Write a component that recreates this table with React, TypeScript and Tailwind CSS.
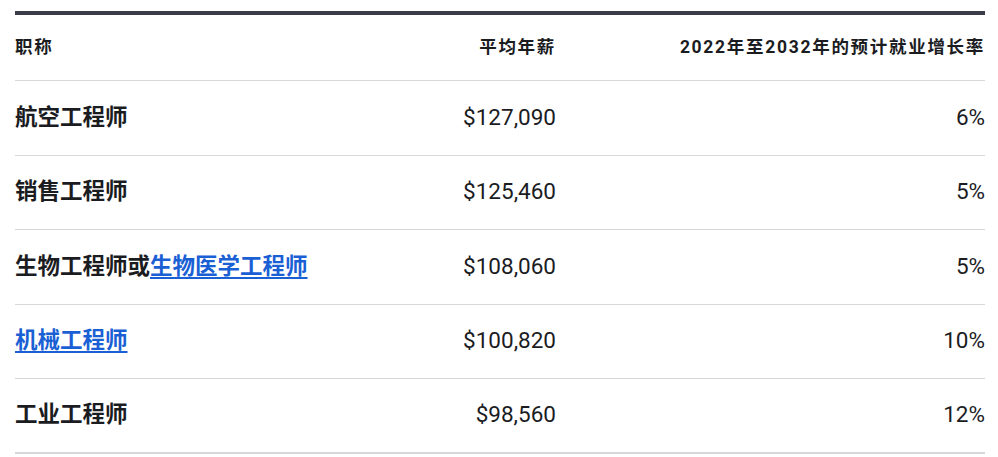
const rows: { title: React.ReactNode; pay: string; growth: string }[] = [
  { title: '航空工程师', pay: '$127,090', growth: '6%' },
  { title: '销售工程师', pay: '$125,460', growth: '5%' },
  {
    title: (
      <>
        生物工程师或
        <a href="#" className="text-[#1a5fd4] underline decoration-2 underline-offset-[3px]">
          生物医学工程师
        </a>
      </>
    ),
    pay: '$108,060',
    growth: '5%',
  },
  {
    title: (
      <a href="#" className="text-[#1a5fd4] underline decoration-2 underline-offset-[3px]">
        机械工程师
      </a>
    ),
    pay: '$100,820',
    growth: '10%',
  },
  { title: '工业工程师', pay: '$98,560', growth: '12%' },
];

export default function App() {
  return (
    <div
      className="min-h-[457px] bg-white pt-[11px] text-[#1b1c1f]"
      style={{ fontFamily: 'Roboto, "Noto Sans CJK SC", sans-serif' }}
    >
      <div className="ml-[15px] w-[970px] border-t-4 border-[#3a3d48]">
        {/* header */}
        <div className="flex h-[66px] items-center border-b border-[#d5d7db] text-[17.5px] font-bold tracking-[1.7px]">
          <div className="w-[330px]">职称</div>
          <div className="w-[211px] text-right">平均年薪</div>
          <div className="flex-1 text-right">2022年至2032年的预计就业增长率</div>
        </div>

        {rows.map((r, i) => (
          <div
            key={i}
            className={[
              'flex h-[74.5px] items-center text-[22.5px]',
              i === rows.length - 1 ? 'border-b-2 border-[#d5d7db]' : 'border-b border-[#d5d7db]',
            ].join(' ')}
          >
            <div className="w-[330px] font-bold">{r.title}</div>
            <div className="w-[211px] text-right">{r.pay}</div>
            <div className="flex-1 text-right">{r.growth}</div>
          </div>
        ))}
      </div>
    </div>
  );
}
